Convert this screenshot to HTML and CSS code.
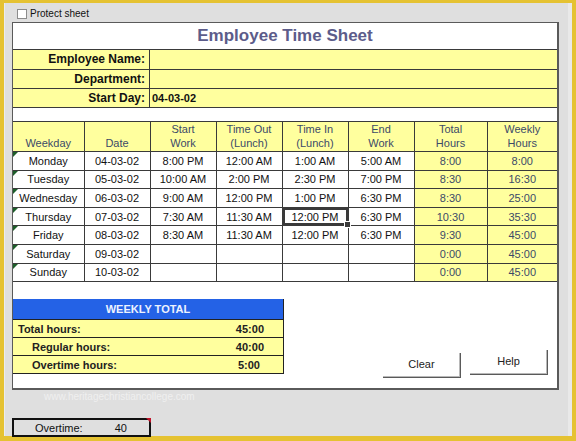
FILE: index.html
```html
<!DOCTYPE html>
<html>
<head>
<meta charset="utf-8">
<link rel="stylesheet" href="styles.css">
</head>
<body>
<div class="frame">
  <div class="topbar">
    <span class="checkbox"></span>
    <span class="protect">Protect sheet</span>
  </div>
  <div class="sheet">
    <div class="title">Employee Time Sheet</div>
    <div class="info r1"><div class="lbl">Employee Name:</div><div class="val"></div></div>
    <div class="info r2"><div class="lbl">Department:</div><div class="val"></div></div>
    <div class="info r3"><div class="lbl">Start Day:</div><div class="val">04-03-02</div></div>
    <table class="grid">
      <colgroup>
        <col class="c1"><col class="c2"><col class="c3"><col class="c4"><col class="c5"><col class="c6"><col class="c7"><col class="c8">
      </colgroup>
      <thead>
        <tr>
          <th>Weekday</th><th>Date</th><th>Start<br>Work</th><th>Time Out<br>(Lunch)</th><th>Time In<br>(Lunch)</th><th>End<br>Work</th><th>Total<br>Hours</th><th>Weekly<br>Hours</th>
        </tr>
      </thead>
      <tbody>
        <tr><td class="wd">Monday</td><td>04-03-02</td><td>8:00 PM</td><td>12:00 AM</td><td>1:00 AM</td><td>5:00 AM</td><td class="h">8:00</td><td class="h">8:00</td></tr>
        <tr><td class="wd">Tuesday</td><td>05-03-02</td><td>10:00 AM</td><td>2:00 PM</td><td>2:30 PM</td><td>7:00 PM</td><td class="h">8:30</td><td class="h">16:30</td></tr>
        <tr><td class="wd">Wednesday</td><td>06-03-02</td><td>9:00 AM</td><td>12:00 PM</td><td>1:00 PM</td><td>6:30 PM</td><td class="h">8:30</td><td class="h">25:00</td></tr>
        <tr><td class="wd">Thursday</td><td>07-03-02</td><td>7:30 AM</td><td>11:30 AM</td><td class="sel">12:00 PM</td><td>6:30 PM</td><td class="h">10:30</td><td class="h">35:30</td></tr>
        <tr><td class="wd">Friday</td><td>08-03-02</td><td>8:30 AM</td><td>11:30 AM</td><td>12:00 PM</td><td>6:30 PM</td><td class="h">9:30</td><td class="h">45:00</td></tr>
        <tr><td class="wd">Saturday</td><td>09-03-02</td><td></td><td></td><td></td><td></td><td class="h">0:00</td><td class="h">45:00</td></tr>
        <tr><td class="wd">Sunday</td><td>10-03-02</td><td></td><td></td><td></td><td></td><td class="h">0:00</td><td class="h">45:00</td></tr>
      </tbody>
    </table>
    <div class="bottom">
      <div class="weekly">
        <div class="wk-head">WEEKLY TOTAL</div>
        <div class="wk-row"><span class="wk-l">Total hours:</span><span class="wk-v">45:00</span></div>
        <div class="wk-row ind"><span class="wk-l">Regular hours:</span><span class="wk-v">40:00</span></div>
        <div class="wk-row ind"><span class="wk-l">Overtime hours:</span><span class="wk-v v2">5:00</span></div>
      </div>
      <div class="buttons">
        <div class="btn clear">Clear</div>
        <div class="btn help">Help</div>
      </div>
    </div>
  </div>
  <div class="watermark">www.heritagechristiancollege.com</div>
  <div class="overtime"><span class="ot-l">Overtime:</span><span class="ot-v">40</span></div>
</div>
</body>
</html>
```
FILE: styles.css
```css
* { box-sizing: border-box; }
html, body { margin: 0; padding: 0; }
body {
  font-family: "Liberation Sans", Arial, sans-serif;
  background: #e5c232;
  width: 576px;
  height: 441px;
  overflow: hidden;
}
.frame {
  width: 576px;
  height: 441px;
  border-style: solid;
  border-color: #e5c232;
  border-width: 3px 4px 5px 4px;
  background: #dfdfdf;
  box-shadow: inset 1px 0 0 #ececec, inset -4px 0 0 #e9e9e9;
}
.topbar {
  height: 19px;
  display: flex;
  align-items: center;
  padding-left: 13px;
}
.checkbox {
  width: 10px;
  height: 10px;
  background: #fff;
  border: 1px solid #8c8c8c;
  margin-top: 2px;
}
.protect {
  font-size: 10px;
  color: #111;
  margin-left: 3px;
  margin-top: 1px;
}
.sheet {
  margin-left: 8px;
  width: 547px;
  height: 368px;
  background: #fff;
  border-top: 1px solid #5a5a5a;
  border-left: 1px solid #5a5a5a;
  border-right: 2px solid #5a5a5a;
  border-bottom: 2px solid #5a5a5a;
  display: flex;
  flex-direction: column;
}
.title {
  height: 27px;
  border-bottom: 1px solid #3a3a3a;
  text-align: center;
  font-size: 17px;
  font-weight: bold;
  color: #5c5c8a;
  line-height: 25px;
}
.info {
  display: flex;
  background: #ffff9e;
  border-bottom: 1px solid #3a3a3a;
  font-size: 12px;
  font-weight: bold;
  color: #111;
}
.info.r1 { height: 20px; }
.info.r2 { height: 19px; }
.info.r3 { height: 19px; }
.lbl {
  width: 137px;
  border-right: 1px solid #3a3a3a;
  text-align: right;
  padding-right: 4px;
  line-height: 19px;
}
.val {
  flex: 1;
  padding-left: 2px;
  font-size: 11px;
  line-height: 19px;
}
.grid {
  margin-top: 13px;
  width: 544px;
  border-collapse: collapse;
  table-layout: fixed;
  font-size: 11px;
}
.c1 { width: 71px; }
.c2, .c3, .c4, .c5, .c6 { width: 66px; }
.c7 { width: 73px; }
.c8 { width: 70px; }
.grid th, .grid td {
  border: 1px solid #3a3a3a;
  padding: 0;
  text-align: center;
}
.grid th:first-child, .grid td:first-child { border-left: none; }
.grid th:last-child, .grid td:last-child { border-right: none; }
.grid th {
  background: #ffff9e;
  font-weight: normal;
  color: #3c4a68;
  height: 30px;
  vertical-align: bottom;
  line-height: 14px;
  padding-bottom: 1px;
}
.grid td {
  height: 18.6px;
  line-height: 16px;
  color: #111;
  background: #fff;
}
.grid td.h {
  background: #ffff9e;
  color: #3c4a68;
}
.grid td.wd { position: relative; }
.grid td.wd::before {
  content: "";
  position: absolute;
  left: 0;
  top: 0;
  border-top: 5px solid #1d5e2a;
  border-right: 5px solid transparent;
}
.grid td.sel {
  position: relative;
  box-shadow: inset 0 0 0 2px #3a3a3a;
}
.grid td.sel::after {
  content: "";
  position: absolute;
  right: -3px;
  bottom: -3px;
  width: 5px;
  height: 5px;
  background: #3a3a3a;
  border: 1px solid #fff;
}
.bottom {
  margin-top: 17px;
  display: flex;
  align-items: flex-end;
}
.weekly {
  width: 271px;
  border-right: 1px solid #222;
  border-bottom: 1px solid #222;
}
.wk-head {
  height: 20px;
  background: #2462e6;
  color: #eef3ff;
  font-size: 11px;
  font-weight: bold;
  text-align: center;
  line-height: 20px;
}
.wk-row {
  height: 18px;
  background: #ffff9e;
  border-top: 1px solid #222;
  display: flex;
  justify-content: space-between;
  align-items: center;
  font-size: 11px;
  font-weight: bold;
  color: #222;
  padding-left: 5px;
  padding-right: 19px;
}
.wk-row.ind { padding-left: 19px; }
.wk-v.v2 { margin-right: 4px; }
.buttons {
  display: flex;
  align-items: flex-end;
  margin-left: 99px;
  gap: 9px;
  margin-bottom: -4px;
}
.btn {
  width: 78px;
  height: 25px;
  font-size: 11px;
  color: #222;
  text-align: center;
  line-height: 23px;
  border-right: 1px solid #5a5a5a;
  border-bottom: 1px solid #5a5a5a;
  box-shadow: inset -1px -1px 0 #b8b8b8;
  background: #fff;
}
.btn.help { margin-bottom: 3px; }
.watermark {
  margin-top: 1px;
  padding-left: 40px;
  font-size: 10px;
  color: #efefef;
  height: 12px;
  line-height: 12px;
}
.overtime {
  margin-top: 15px;
  margin-left: 8px;
  width: 139px;
  height: 19px;
  border: 2px solid #111;
  position: relative;
  display: flex;
  align-items: center;
  font-size: 11px;
  color: #111;
}
.overtime::after {
  content: "";
  position: absolute;
  right: -2px;
  top: -2px;
  border-top: 5px solid #c0142a;
  border-left: 5px solid transparent;
}
.ot-l { margin-left: 21px; }
.ot-v { margin-left: 32px; }
```
